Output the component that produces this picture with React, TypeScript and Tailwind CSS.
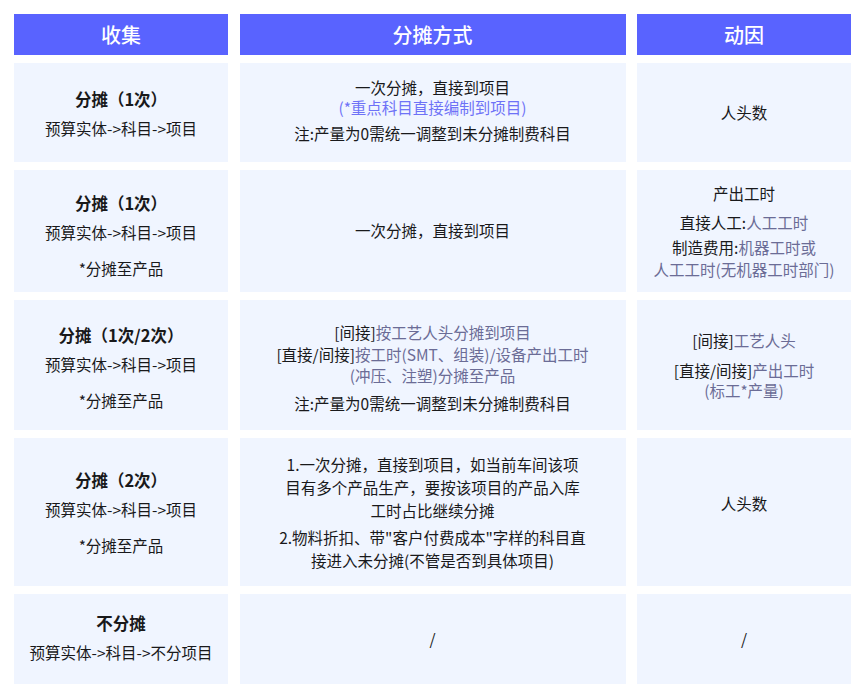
import type { ReactNode } from "react";

const font = { fontFamily: '"Noto Sans CJK SC", "Noto Sans", sans-serif' };

function Cell({ children, className = "" }: { children: ReactNode; className?: string }) {
  return (
    <div className={`flex flex-col items-center justify-center bg-[#f0f5ff] text-center text-[15.5px] text-[#19191b] ${className}`}>
      {children}
    </div>
  );
}

function Head({ children }: { children: ReactNode }) {
  return (
    <div className="flex items-center justify-center bg-[#5963ff] text-[20px] font-medium text-white">
      {children}
    </div>
  );
}

function Collect({ title, sub, note, className }: { title: string; sub: string; note?: boolean; className?: string }) {
  return (
    <Cell className={className}>
      <div className="text-[16.5px] font-bold leading-6">{title}</div>
      <div className="mt-[6px] leading-[22px]">{sub}</div>
      {note ? <div className="mt-[14px] leading-[22px]">*分摊至产品</div> : null}
    </Cell>
  );
}

const G = ({ children }: { children: ReactNode }) => <span className="text-[#6b6c96]">{children}</span>;

export default function App() {
  return (
    <div style={font} className="min-h-[696px] w-[867px] bg-white pl-[14px] pt-[14px]">
      <div className="grid grid-cols-[214px_386px_214px] grid-rows-[41px_99px_122px_130px_148px_90px] gap-x-[11.5px] gap-y-2">
        <Head>收集</Head>
        <Head>分摊方式</Head>
        <Head>动因</Head>

        <Collect title="分摊（1次）" sub="预算实体->科目->项目" />
        <Cell className="pb-[5px]">
          <div className="leading-5">一次分摊，直接到项目</div>
          <div className="leading-5 text-[#6e72f7]">(*重点科目直接编制到项目)</div>
          <div className="mt-[6px] leading-5">注:产量为0需统一调整到未分摊制费科目</div>
        </Cell>
        <Cell>人头数</Cell>

        <Collect title="分摊（1次）" sub="预算实体->科目->项目" note className="pt-2" />
        <Cell>一次分摊，直接到项目</Cell>
        <Cell>
          <div className="leading-[22px]">产出工时</div>
          <div className="mt-[7px] leading-[22px]">
            直接人工:<G>人工工时</G>
          </div>
          <div className="mt-[3px] leading-[22px]">
            制造费用:<G>机器工时或</G>
          </div>
          <div className="leading-[22px]">
            <G>人工工时(无机器工时部门)</G>
          </div>
        </Cell>

        <Collect title="分摊（1次/2次）" sub="预算实体->科目->项目" note className="pt-1" />
        <Cell className="pt-[6px]">
          <div className="leading-[21.5px]">
            [间接]<G>按工艺人头分摊到项目</G>
          </div>
          <div className="leading-[21.5px]">
            [直接/间接]<G>按工时(SMT、组装)/设备产出工时</G>
          </div>
          <div className="leading-[21.5px]">
            <G>(冲压、注塑)分摊至产品</G>
          </div>
          <div className="mt-[6px] leading-[21.5px]">注:产量为0需统一调整到未分摊制费科目</div>
        </Cell>
        <Cell>
          <div className="leading-5">
            [间接]<G>工艺人头</G>
          </div>
          <div className="mt-[10px] leading-5">
            [直接/间接]<G>产出工时</G>
          </div>
          <div className="leading-5">
            <G>(标工*产量)</G>
          </div>
        </Cell>

        <Collect title="分摊（2次）" sub="预算实体->科目->项目" note />
        <Cell>
          <div className="leading-[23px]">1.一次分摊，直接到项目，如当前车间该项</div>
          <div className="leading-[23px]">目有多个产品生产，要按该项目的产品入库</div>
          <div className="leading-[23px]">工时占比继续分摊</div>
          <div className="mt-1 leading-[23px]">2.物料折扣、带"客户付费成本"字样的科目直</div>
          <div className="leading-[23px]">接进入未分摊(不管是否到具体项目)</div>
        </Cell>
        <Cell className="pb-4">人头数</Cell>

        <Collect title="不分摊" sub="预算实体->科目->不分项目" className="pb-1" />
        <Cell>/</Cell>
        <Cell>/</Cell>
      </div>
    </div>
  );
}
